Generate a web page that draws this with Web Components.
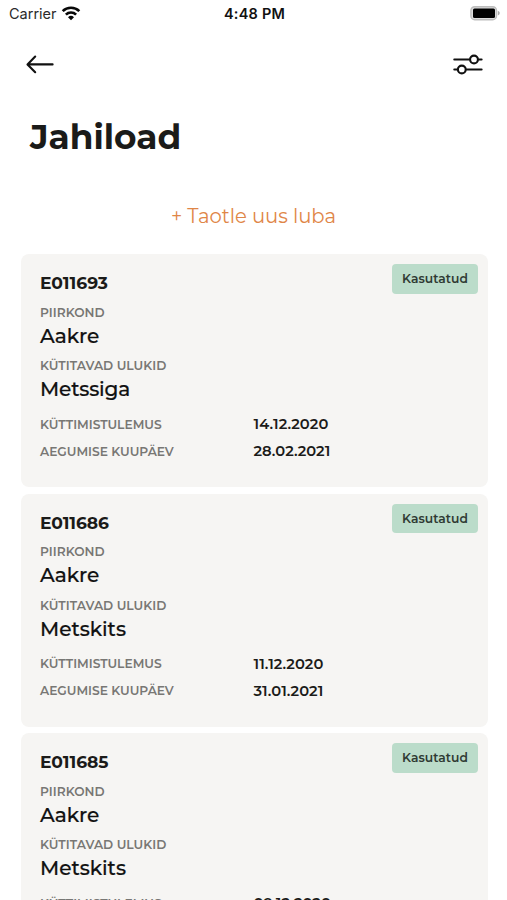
<!DOCTYPE html>
<html lang="et">
<head>
<meta charset="utf-8">
<title>Jahiload</title>
<style>
html,body{margin:0;height:900px;overflow:hidden;background:#fff}
body{font-family:Montserrat,Inter,"Liberation Sans",sans-serif;color:#1b1b19}
</style>
</head>
<body>
<permits-screen></permits-screen>
<script>
function define(name, html, setup) {
  const tpl = document.createElement('template');
  tpl.innerHTML = html;
  customElements.define(name, class extends HTMLElement {
    constructor() {
      super();
      this.attachShadow({mode: 'open'}).append(tpl.content.cloneNode(true));
    }
    connectedCallback() { if (setup) setup(this, this.shadowRoot); }
  });
}

/* A single line of text, tracked so that it spans the width given in "w". */
define('tracked-text', `<style>
:host{display:block;white-space:nowrap}
span{display:inline-block}
</style><span></span>`, (el, root) => {
  const span = root.querySelector('span');
  const text = el.getAttribute('text');
  span.textContent = text;
  span.style.letterSpacing = '0px';
  const w = span.getBoundingClientRect().width;
  const step = (parseFloat(el.getAttribute('w')) - w) / (text.length - 1);
  span.style.letterSpacing = step.toFixed(3) + 'px';
  span.style.marginRight = (-step).toFixed(3) + 'px';
});

define('status-bar', `<style>
:host{display:grid;grid-template-columns:1fr auto 1fr;align-items:center;height:28px;padding:0 7px 0 9px;font-family:Inter,sans-serif;font-size:14.5px;line-height:28px;color:#111}
.l{display:flex;align-items:center;gap:4px;color:#2a2a2a}
.t{font-weight:600}
.r{display:flex;justify-content:flex-end}
svg{display:block}
.l svg{margin-top:-2px}
.r svg{margin-top:-2px}
</style>
<div class="l"><tracked-text text="Carrier" w="47.5"></tracked-text>
<svg width="20" height="16" viewBox="0 0 20 16" fill="none" stroke="#080808" stroke-width="2.7"><path d="M1.7 6.1a11.9 11.9 0 0 1 16.6 0M4.9 9.6a7.3 7.3 0 0 1 10.2 0"/><path d="M10 15.2 7 12.2a4.3 4.3 0 0 1 6 0z" fill="#080808" stroke="none"/></svg></div>
<tracked-text class="t" text="4:48 PM" w="61"></tracked-text>
<div class="r"><svg width="30" height="16" viewBox="0 0 30 16"><rect x=".9" y="1.7" width="25.6" height="13" rx="3.8" fill="#ddd" stroke="#bdbdbd" stroke-width="1.4"/><rect x="3" y="3.6" width="22" height="9.3" rx="1.5" fill="#000"/><path d="M27.8 5.8q2 .6 2 2.3t-2 2.3z" fill="#aaa"/></svg></div>`);

define('nav-bar', `<style>
:host{display:flex;justify-content:space-between;align-items:center;height:72px;padding:0 24px 0 26px}
svg{display:block;fill:none;stroke:#111;stroke-width:2.1;stroke-linecap:round;stroke-linejoin:round}
</style>
<svg width="28" height="20" viewBox="0 0 28 20"><path d="M9.2 2.5 1.5 10.4l7.7 7.8M1.8 10.4h24.8"/></svg>
<svg width="30" height="22" viewBox="0 0 30 22"><path d="M1.3 6.5h15.6M25.2 6.5h3.4M1.3 16.5h3.4M13 16.5h15.6"/><circle cx="21" cy="6.5" r="3.9"/><circle cx="8.8" cy="16.5" r="3.9"/></svg>`);

define('status-badge', `<style>
:host{display:flex;align-items:center;justify-content:center;width:86px;height:29.5px;border-radius:4px;background:#bbdcca;color:#2f3a33;font-size:12.3px;font-weight:600;line-height:30px}
tracked-text{padding-top:1px}
</style><tracked-text text="Kasutatud" w="65.8"></tracked-text>`);

define('permit-card', `<style>
:host{display:block;position:relative;box-sizing:border-box;height:233px;padding:17.2px 10px 0 19px;border-radius:8px;background:#f6f5f3}
.id{font-size:17.15px;font-weight:700;line-height:24px;margin-bottom:8.8px}
.label{font-size:12.25px;font-weight:600;line-height:18px;color:#787774}
.value{font-size:20.1px;font-weight:500;line-height:24px;margin:2px 0 9.5px;color:#111;-webkit-text-stroke:.2px #111}
.value.last{margin-bottom:9.3px}
.row{display:grid;grid-template-columns:213.5px 1fr;height:27px;align-items:center}
.date{font-size:14.7px;font-weight:600;line-height:20px}
.row .label{padding-top:1px}
status-badge{position:absolute;right:10px;top:10px}
</style>
<tracked-text class="id"></tracked-text>
<tracked-text class="label" text="PIIRKOND" w="64.7"></tracked-text>
<tracked-text class="value" text="Aakre" w="59.3"></tracked-text>
<tracked-text class="label" text="KÜTITAVAD ULUKID" w="126.3"></tracked-text>
<tracked-text class="value last game"></tracked-text>
<div class="row"><tracked-text class="label" text="KÜTTIMISTULEMUS" w="121.7"></tracked-text><tracked-text class="date result"></tracked-text></div>
<div class="row"><tracked-text class="label" text="AEGUMISE KUUPÄEV" w="133.8"></tracked-text><tracked-text class="date expiry"></tracked-text></div>
<status-badge></status-badge>`);

/* Builds a card and sets the text and width of its variable lines before it is placed. */
function makeCard(data) {
  const card = document.createElement('permit-card');
  for (const [cls, [text, w]] of Object.entries(data)) {
    const line = card.shadowRoot.querySelector('.' + cls);
    line.setAttribute('text', text);
    line.setAttribute('w', w);
  }
  return card;
}

define('permits-screen', `<style>
:host{display:block;height:900px;overflow:hidden;background:#fff}
.title{padding:18px 0 0 30px;font-size:34.3px;font-weight:700;line-height:38px}
.add{display:flex;justify-content:center;padding-top:48px;font-size:19.6px;line-height:24px;color:#df8647}
.list{display:flex;flex-direction:column;gap:6.5px;padding:26px 19px 0 21px}
permit-card{flex:none}
</style>
<status-bar></status-bar><nav-bar></nav-bar>
<tracked-text class="title" text="Jahiload" w="151.3"></tracked-text>
<div class="add"><tracked-text text="+ Taotle uus luba" w="165.2"></tracked-text></div>
<div class="list"></div>`, (el, root) => {
  root.querySelector('.list').append(
    makeCard({id: ['E011693', 68], game: ['Metssiga', 90.3], result: ['14.12.2020', 74.8], expiry: ['28.02.2021', 76.8]}),
    makeCard({id: ['E011686', 69], game: ['Metskits', 86], result: ['11.12.2020', 69.8], expiry: ['31.01.2021', 69.8]}),
    makeCard({id: ['E011685', 68.5], game: ['Metskits', 86], result: ['09.12.2020', 77.3], expiry: ['31.01.2021', 69.8]}));
});
</script>
</body>
</html>
